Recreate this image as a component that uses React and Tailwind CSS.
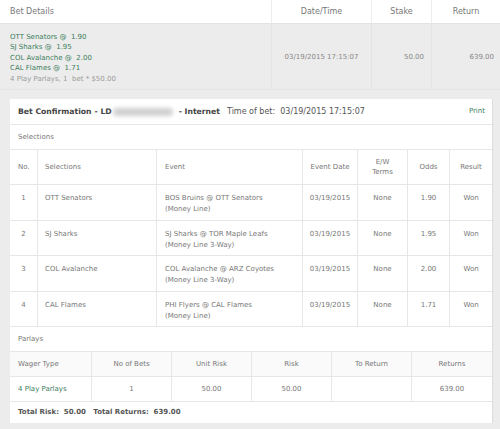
export default function App() {
  const legs = [
    { name: "OTT Senators", odds: "1.90" },
    { name: "SJ Sharks", odds: "1.95" },
    { name: "COL Avalanche", odds: "2.00" },
    { name: "CAL Flames", odds: "1.71" },
  ];

  const selections = [
    { no: 1, sel: "OTT Senators", event: "BOS Bruins @ OTT Senators", line: "(Money Line)", odds: "1.90", h: "h-[36px]" },
    { no: 2, sel: "SJ Sharks", event: "SJ Sharks @ TOR Maple Leafs", line: "(Money Line 3-Way)", odds: "1.95", h: "h-[35px]" },
    { no: 3, sel: "COL Avalanche", event: "COL Avalanche @ ARZ Coyotes", line: "(Money Line 3-Way)", odds: "2.00", h: "h-[36px]" },
    { no: 4, sel: "CAL Flames", event: "PHI Flyers @ CAL Flames", line: "(Money Line)", odds: "1.71", h: "h-[35px]" },
  ];

  const selCols = "grid grid-cols-[28px_119px_146px_55px_50px_42px_42px]";
  const parCols = "grid grid-cols-[82px_80px_80px_80px_80px_80px]";

  return (
    <div className="w-[500px] h-[429px] overflow-hidden bg-[#ececec] font-['DejaVu_Sans',Verdana,sans-serif] text-[#666]">
      {/* Bet details summary */}
      <div className="grid grid-cols-[272px_100px_60px_68px] h-[24px] bg-white border-b border-[#e3e3e3] text-[8px] text-[#777]">
        <div className="flex items-center pl-[10px] border-r border-[#eee]">Bet Details</div>
        <div className="flex items-center justify-center border-r border-[#eee]">Date/Time</div>
        <div className="flex items-center justify-center border-r border-[#eee]">Stake</div>
        <div className="flex items-center justify-center">Return</div>
      </div>
      <div className="grid grid-cols-[272px_100px_60px_68px] h-[66px] border-b border-[#e4e4e4] text-[7px]">
        <div className="flex flex-col justify-center pl-[10px] pt-[3px] leading-[10.5px] border-r border-[#e4e4e4]">
          {legs.map((l) => (
            <div key={l.name} className="text-[#3b7d5b]">
              {l.name} @&nbsp; {l.odds}
            </div>
          ))}
          <div className="text-[#9a9a9a]">4 Play Parlays, 1&nbsp; bet * $50.00</div>
        </div>
        <div className="flex items-center justify-center pt-[2px] text-[#888] border-r border-[#e4e4e4]">03/19/2015 17:15:07</div>
        <div className="flex items-center justify-end pt-[2px] pr-[7px] text-[#888] border-r border-[#e4e4e4]">50.00</div>
        <div className="flex items-center justify-end pt-[2px] pr-[6px] text-[#888]">639.00</div>
      </div>

      {/* Confirmation card */}
      <div className="pt-[9px] pl-[10px]">
        <div className="w-[483px] bg-white border-r border-[#dcdcdc]">
          <div className="flex items-center h-[26px] pl-[8px] pr-[7px] border-b border-[#e6e6e6] text-[8px] text-[#555]">
            <span className="font-bold text-[7.7px] text-[#444]">Bet Confirmation</span>
            <span className="ml-[3px] font-bold text-[7.7px] text-[#444]">- LD</span>
            <span className="ml-[1px] w-[60px] h-[8px] bg-[#cfcfcf] blur-[2px] rounded-full"></span>
            <span className="ml-[6px] font-bold text-[7.7px] text-[#444]">- Internet</span>
            <span className="ml-[7px]">Time of bet:&nbsp; 03/19/2015 17:15:07</span>
            <span className="ml-auto text-[7px] text-[#3b7d5b]">Print</span>
          </div>
          <div className="flex items-center h-[25px] pl-[8px] border-b border-[#e6e6e6] text-[7px] text-[#777]">Selections</div>

          {/* Selections table */}
          <div className={`${selCols} h-[35px] border-b border-[#e6e6e6] text-[7px] text-[#777]`}>
            <div className="flex items-center pl-[8px] border-r border-[#e6e6e6]">No.</div>
            <div className="flex items-center pl-[7px] border-r border-[#e6e6e6]">Selections</div>
            <div className="flex items-center pl-[8px] border-r border-[#e6e6e6]">Event</div>
            <div className="flex items-center justify-center border-r border-[#e6e6e6]">Event Date</div>
            <div className="flex items-center justify-center text-center leading-[10.5px] border-r border-[#e6e6e6]">E/W<br />Terms</div>
            <div className="flex items-center justify-center border-r border-[#e6e6e6]">Odds</div>
            <div className="flex items-center justify-center">Result</div>
          </div>
          {selections.map((s) => (
            <div key={s.no} className={`${selCols} ${s.h} border-b border-[#e6e6e6] text-[7px] text-[#777] leading-[11px]`}>
              <div className="pt-[8px] text-center border-r border-[#e6e6e6]">{s.no}</div>
              <div className="pt-[8px] pl-[7px] border-r border-[#e6e6e6]">{s.sel}</div>
              <div className="pt-[8px] pl-[8px] border-r border-[#e6e6e6]">
                <div>{s.event}</div>
                <div>{s.line}</div>
              </div>
              <div className="pt-[8px] text-center border-r border-[#e6e6e6]">03/19/2015</div>
              <div className="pt-[8px] text-center border-r border-[#e6e6e6]">None</div>
              <div className="pt-[8px] text-center border-r border-[#e6e6e6]">{s.odds}</div>
              <div className="pt-[8px] text-center">Won</div>
            </div>
          ))}

          <div className="flex items-center h-[25px] pl-[8px] border-b border-[#e6e6e6] text-[7px] text-[#777]">Parlays</div>

          {/* Parlays table */}
          <div className={`${parCols} h-[25px] border-b border-[#e6e6e6] bg-[#fafafa] text-[7px] text-[#777]`}>
            <div className="flex items-center pl-[8px] border-r border-[#e6e6e6]">Wager Type</div>
            <div className="flex items-center justify-center border-r border-[#e6e6e6]">No of Bets</div>
            <div className="flex items-center justify-center border-r border-[#e6e6e6]">Unit Risk</div>
            <div className="flex items-center justify-center border-r border-[#e6e6e6]">Risk</div>
            <div className="flex items-center justify-center border-r border-[#e6e6e6]">To Return</div>
            <div className="flex items-center justify-center">Returns</div>
          </div>
          <div className={`${parCols} h-[25px] border-b border-[#e6e6e6] text-[7px] text-[#777]`}>
            <div className="flex items-center pl-[8px] text-[#3b7d5b] border-r border-[#e6e6e6]">4 Play Parlays</div>
            <div className="flex items-center justify-center border-r border-[#e6e6e6]">1</div>
            <div className="flex items-center justify-center border-r border-[#e6e6e6]">50.00</div>
            <div className="flex items-center justify-center border-r border-[#e6e6e6]">50.00</div>
            <div className="flex items-center justify-center border-r border-[#e6e6e6]"></div>
            <div className="flex items-center justify-center">639.00</div>
          </div>

          <div className="flex items-center h-[21px] pl-[8px] text-[7px] font-bold text-[#555]">
            Total Risk:&nbsp; 50.00&nbsp;&nbsp; Total Returns:&nbsp; 639.00
          </div>
        </div>
      </div>
    </div>
  );
}
